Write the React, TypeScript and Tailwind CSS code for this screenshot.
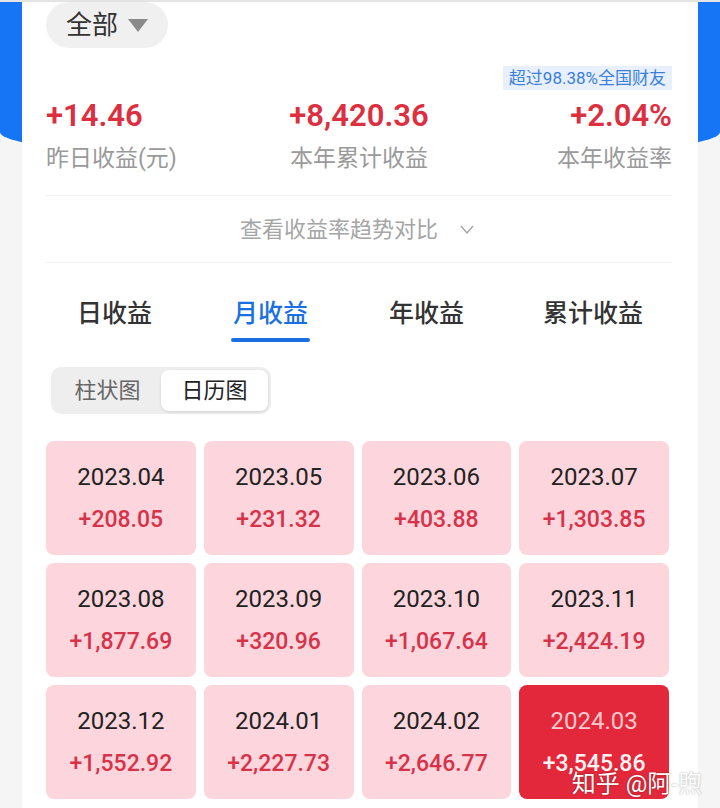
import React from 'react';

interface MonthItem {
  month: string;
  value: string;
  current?: boolean;
}

const months: MonthItem[] = [
  { month: '2023.04', value: '+208.05' },
  { month: '2023.05', value: '+231.32' },
  { month: '2023.06', value: '+403.88' },
  { month: '2023.07', value: '+1,303.85' },
  { month: '2023.08', value: '+1,877.69' },
  { month: '2023.09', value: '+320.96' },
  { month: '2023.10', value: '+1,067.64' },
  { month: '2023.11', value: '+2,424.19' },
  { month: '2023.12', value: '+1,552.92' },
  { month: '2024.01', value: '+2,227.73' },
  { month: '2024.02', value: '+2,646.77' },
  { month: '2024.03', value: '+3,545.86', current: true },
];

const tabs = ['日收益', '月收益', '年收益', '累计收益'];

export default function App() {
  return (
    <div className="relative min-h-screen overflow-hidden border-t-2 border-[#e4e4e4] bg-[#f5f5f5] font-['Roboto','Noto_Sans_CJK_SC',sans-serif]">
      {/* blue header behind the card */}
      <div className="h-[160px] bg-[#1675f4] rounded-b-[50%_30px]" />

      <div className="mx-[22px] -mt-[160px] min-h-[808px] bg-white pl-6 pr-[26px]">
        {/* account selector */}
        <div className="flex h-[46px] w-[122px] items-center justify-center gap-[10px] rounded-full bg-[#f0f0f0]">
          <span className="text-[26px] leading-none text-[#333]">全部</span>
          <svg width="20" height="13" viewBox="0 0 20 13">
            <path d="M0 0 H20 L10 13 Z" fill="#8a8a8a" />
          </svg>
        </div>

        <div className="mt-[18px] flex justify-end">
          <span className="flex h-6 items-center bg-[#e7f0fc] px-[6px] text-[17px] leading-none text-[#3b7fd9]">
            超过98.38%全国财友
          </span>
        </div>

        {/* summary */}
        <div className="mt-[8px] grid grid-cols-3">
          <div className="flex flex-col items-start">
            <span className="text-[31px] leading-[36px] font-semibold text-[#dc2f3f]">+14.46</span>
            <span className="mt-[11px] text-[23px] leading-[27px] text-[#9a9a9a]">昨日收益(元)</span>
          </div>
          <div className="flex flex-col items-center">
            <span className="text-[31px] leading-[36px] font-semibold text-[#dc2f3f]">+8,420.36</span>
            <span className="mt-[11px] text-[23px] leading-[27px] text-[#9a9a9a]">本年累计收益</span>
          </div>
          <div className="flex flex-col items-end">
            <span className="text-[31px] leading-[36px] font-semibold text-[#dc2f3f]">+2.04%</span>
            <span className="mt-[11px] text-[23px] leading-[27px] text-[#9a9a9a]">本年收益率</span>
          </div>
        </div>

        <div className="mt-[23px] h-px bg-[#f1f1f1]" />
        <div className="flex h-[66px] items-center justify-center gap-[22px] pr-[4px]">
          <span className="text-[22px] text-[#a5a5a5]">查看收益率趋势对比</span>
          <svg width="14" height="9" viewBox="0 0 14 9" fill="none">
            <path d="M1 1 L7 8 L13 1" stroke="#a5a5a5" strokeWidth="1.4" />
          </svg>
        </div>
        <div className="h-px bg-[#f1f1f1]" />

        {/* tabs */}
        <div className="mt-[36px] flex justify-between pl-[31px] pr-[29px]">
          {tabs.map((t, i) => (
            <div key={t} className="flex flex-col items-center">
              <span
                className={
                  i === 1
                    ? 'text-[25px] leading-[30px] font-medium text-[#1a6fe3]'
                    : 'text-[25px] leading-[30px] font-medium text-[#333]'
                }
              >
                {t}
              </span>
              <div className={i === 1 ? 'mt-[9px] h-1 w-[79px] rounded-full bg-[#1a6fe3]' : 'mt-[9px] h-1'} />
            </div>
          ))}
        </div>

        {/* chart type switch */}
        <div className="ml-[5px] mt-[25px] flex h-[47px] w-[220px] rounded-[10px] bg-[#eeeeee] p-[3px]">
          <div className="flex flex-1 items-center justify-center text-[22px] text-[#666]">柱状图</div>
          <div className="flex w-[107px] items-center justify-center rounded-[8px] bg-white text-[22px] text-[#222] shadow-[0_1px_3px_rgba(0,0,0,0.12)]">
            日历图
          </div>
        </div>

        {/* month calendar */}
        <div className="mt-[27px] grid grid-cols-4 gap-x-2 gap-y-[8px] pr-[3px]">
          {months.map((m) => (
            <div
              key={m.month}
              className={
                m.current
                  ? 'flex h-[114px] flex-col items-center justify-center rounded-[8px] bg-[#e2283a]'
                  : 'flex h-[114px] flex-col items-center justify-center rounded-[8px] bg-[#fcd6dc]'
              }
            >
              <span className={m.current ? 'text-[24px] leading-none text-[#fbc9ce]' : 'text-[24px] leading-none text-[#222]'}>
                {m.month}
              </span>
              <span
                className={
                  m.current
                    ? 'mt-[19px] text-[23px] leading-none font-medium text-[#fff3f4]'
                    : 'mt-[19px] text-[23px] leading-none font-medium text-[#d6334b]'
                }
              >
                {m.value}
              </span>
            </div>
          ))}
        </div>
      </div>

      {/* watermark */}
      <div className="absolute right-[18px] top-[770px] text-[24px] leading-none text-white [text-shadow:0_0_2px_rgba(0,0,0,0.4)]">
        知乎 @阿-煦
      </div>
    </div>
  );
}
